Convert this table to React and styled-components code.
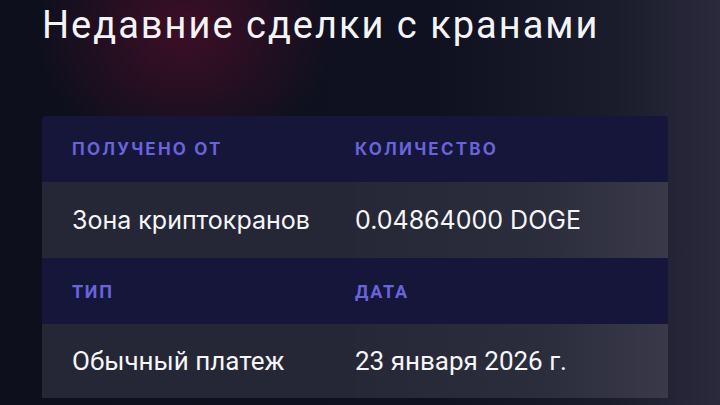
import React from "react";
import styled, { createGlobalStyle } from "styled-components";

const Global = createGlobalStyle`
  html, body {
    margin: 0;
    padding: 0;
    background: #0d0f1d;
  }
`;

const Page = styled.div`
  width: 720px;
  height: 405px;
  overflow: hidden;
  box-sizing: border-box;
  padding: 3px 52px 0 42px;
  background:
    radial-gradient(ellipse 150px 130px at 185px 30px, rgba(70, 14, 38, 0.85), rgba(70, 14, 38, 0) 100%),
    linear-gradient(90deg, #0d0f1d 0%, #0f1120 60%, #1a1b2b 85%, #2a2a3c 100%);
`;

const Title = styled.h1`
  margin: 0;
  font-family: Roboto, "Liberation Sans", sans-serif;
  font-weight: 400;
  font-size: 38px;
  line-height: 44px;
  letter-spacing: 2px;
  color: #f4f4f8;
`;

const Card = styled.div`
  margin-top: 69px;
  border-radius: 4px 4px 0 0;
  overflow: hidden;
  display: grid;
  grid-template-columns: 313px 1fr;
`;

const HeadCell = styled.div`
  height: 66px;
  display: flex;
  align-items: center;
  padding-left: ${(p) => (p.$first ? "30px" : "0")};
  background: #15163a;
  font-family: ${(p) => (p.$narrow ? "Roboto" : "Inter")}, "Liberation Sans", sans-serif;
  font-weight: 700;
  font-size: ${(p) => (p.$narrow ? "18px" : "17px")};
  letter-spacing: ${(p) => (p.$narrow ? "1.7px" : "2.2px")};
  color: #6764dc;
`;

const DataCell = styled.div`
  height: ${(p) => p.$h}px;
  display: flex;
  align-items: center;
  padding-left: ${(p) => (p.$first ? "30px" : "0")};
  background: ${(p) =>
    p.$first ? "#262736" : "linear-gradient(90deg, #272837 0%, #2c2d3c 60%, #393949 100%)"};
  font-family: ${(p) => (p.$narrow ? "Roboto" : "Inter")}, "Liberation Sans", sans-serif;
  font-weight: 400;
  font-size: ${(p) => (p.$narrow ? "26px" : "25px")};
  color: #f6f6fa;
`;

export default function App() {
  return (
    <Page>
      <Global />
      <Title>Недавние сделки с кранами</Title>
      <Card>
        <HeadCell $first>ПОЛУЧЕНО ОТ</HeadCell>
        <HeadCell>КОЛИЧЕСТВО</HeadCell>
        <DataCell $first $h={76}>Зона криптокранов</DataCell>
        <DataCell $h={76}>0.04864000 DOGE</DataCell>
        <HeadCell $first $narrow>ТИП</HeadCell>
        <HeadCell $narrow>ДАТА</HeadCell>
        <DataCell $first $narrow $h={74}>Обычный платеж</DataCell>
        <DataCell $narrow $h={74}>23 января 2026 г.</DataCell>
      </Card>
    </Page>
  );
}
